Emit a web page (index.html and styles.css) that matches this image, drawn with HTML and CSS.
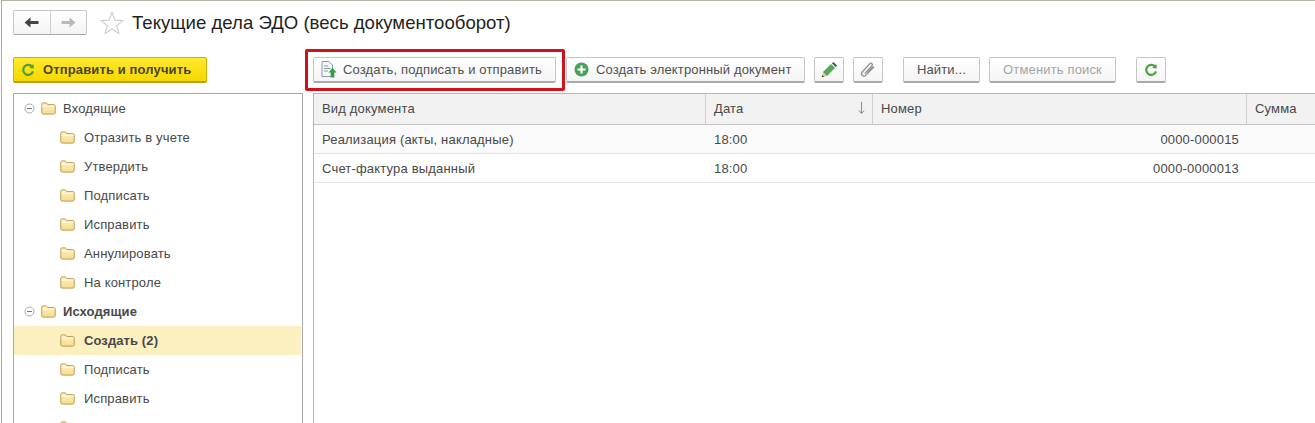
FILE: index.html
```html
<!DOCTYPE html>
<html lang="ru">
<head>
<meta charset="utf-8">
<title>Текущие дела ЭДО</title>
<link rel="stylesheet" href="styles.css">
</head>
<body>
<svg class="defs" width="0" height="0" aria-hidden="true">
  <defs>
    <linearGradient id="fg" x1="0" y1="0" x2="0" y2="1"><stop offset="0" stop-color="#fdf3c4"/><stop offset="1" stop-color="#f5dc90"/></linearGradient>
    <symbol id="folder" viewBox="0 0 15 13">
      <path d="M.8 2.2C.8 1.4 1.3 .9 2.1 .9H5.4L6.8 2.6H12.8C13.6 2.6 14.2 3.1 14.2 3.9V10.9C14.2 11.6 13.6 12.1 12.8 12.1H2.1C1.3 12.1 .8 11.6 .8 10.9Z" fill="url(#fg)" stroke="#c09a4a"/>
      <path d="M1.4 4.2H13.6" stroke="#fffbe6" fill="none"/>
    </symbol>
    <symbol id="minus" viewBox="0 0 11 11">
      <circle cx="5.5" cy="5.5" r="4.5" fill="#fff" stroke="#a9a9a9"/><path d="M3 5.5H8" stroke="#777" fill="none"/>
    </symbol>
    <symbol id="refresh" viewBox="0 0 14 14">
      <path d="M11.4 4.2A5 5 0 1 0 12 8.4" fill="none" stroke="#4c9f3f" stroke-width="2.2"/>
      <path d="M8.4 4.9L12.9 5.4L12.4 1Z" fill="#4c9f3f"/>
    </symbol>
  </defs>
</svg>
<div class="window">
  <header class="head">
    <div class="nav">
      <span class="nav-cell"><svg width="15" height="11" viewBox="0 0 15 11"><path d="M.5 5.5L6.5 .5V4H14.5V7H6.5V10.5Z" fill="#444"/></svg></span>
      <span class="nav-cell"><svg width="15" height="11" viewBox="0 0 15 11"><path d="M14.5 5.5L8.5 .5V4H.5V7H8.5V10.5Z" fill="#b9b9b9"/></svg></span>
    </div>
    <svg class="star" width="24" height="24" viewBox="0 0 24 24"><path d="M12 1.5L14.9 9.2L23 9.6L16.7 14.6L18.8 22.5L12 18L5.2 22.5L7.3 14.6L1 9.6L9.1 9.2Z" fill="#fff" stroke="#cfcfcf" stroke-width="1.2"/></svg>
    <h1 class="title">Текущие дела ЭДО (весь документооборот)</h1>
  </header>
  <div class="main">
    <aside class="side">
      <button class="btn btn-yellow"><svg class="i14" width="14" height="14"><use href="#refresh"/></svg>Отправить и получить</button>
      <nav class="tree">
        <div class="row group"><svg class="tog" width="11" height="11"><use href="#minus"/></svg><svg class="fold" width="15" height="13"><use href="#folder"/></svg>Входящие</div>
        <div class="row child"><svg class="fold" width="15" height="13"><use href="#folder"/></svg>Отразить в учете</div>
        <div class="row child"><svg class="fold" width="15" height="13"><use href="#folder"/></svg>Утвердить</div>
        <div class="row child"><svg class="fold" width="15" height="13"><use href="#folder"/></svg>Подписать</div>
        <div class="row child"><svg class="fold" width="15" height="13"><use href="#folder"/></svg>Исправить</div>
        <div class="row child"><svg class="fold" width="15" height="13"><use href="#folder"/></svg>Аннулировать</div>
        <div class="row child"><svg class="fold" width="15" height="13"><use href="#folder"/></svg>На контроле</div>
        <div class="row group bold"><svg class="tog" width="11" height="11"><use href="#minus"/></svg><svg class="fold" width="15" height="13"><use href="#folder"/></svg>Исходящие</div>
        <div class="row child bold active"><svg class="fold" width="15" height="13"><use href="#folder"/></svg>Создать (2)</div>
        <div class="row child"><svg class="fold" width="15" height="13"><use href="#folder"/></svg>Подписать</div>
        <div class="row child"><svg class="fold" width="15" height="13"><use href="#folder"/></svg>Исправить</div>
        <div class="row child"><svg class="fold" width="15" height="13"><use href="#folder"/></svg>Аннулировать</div>
      </nav>
    </aside>
    <section class="content">
      <div class="toolbar">
        <button class="btn b-create"><svg width="16" height="17" viewBox="0 0 16 17"><path d="M1 .5H8L11.5 4V15.5H1Z" fill="#f4f6f8" stroke="#8d99a6"/><path d="M3 5H7M3 7.5H9.5M3 10H7" stroke="#8d99a6" fill="none"/><path d="M11.5 7L15.5 11.5H13.3V16.5H9.7V11.5H7.5Z" fill="#2f9e44"/></svg>Создать, подписать и отправить</button>
        <button class="btn b-edoc"><svg width="15" height="15" viewBox="0 0 15 15"><circle cx="7.5" cy="7.5" r="7" fill="#45a35a"/><path d="M7.5 3.5V11.5M3.5 7.5H11.5" stroke="#fff" stroke-width="2.2" fill="none"/></svg>Создать электронный документ</button>
        <button class="btn b-icon b-pencil"><svg width="16" height="16" viewBox="0 0 16 16"><path d="M.8 15.2L2 10L6 14Z" fill="#e0c690"/><path d="M.8 15.2L1.3 13L3 14.7Z" fill="#4a3f2a"/><path d="M2 10L10 2L14 6L6 14Z" fill="#57a65c"/><path d="M10.8 1.2L11.8 .4C12.2 .1 12.6 .1 13 .4L15.6 3C15.9 3.4 15.9 3.8 15.6 4.2L14.8 5.2Z" fill="#2f6f45"/></svg></button>
        <button class="btn b-icon b-clip"><svg width="18" height="18" viewBox="0 0 18 18"><path d="M5.8 12.6L13 4.8C14.2 3.4 12.4 1.4 10.8 2.8L3.2 11C1.2 13.2 4.2 16.6 6.6 14.4L15 5.8M8.4 12L14 6" fill="none" stroke="#8f8f8f" stroke-width="1.3"/></svg></button>
        <button class="btn b-find">Найти...</button>
        <button class="btn b-cancel">Отменить поиск</button>
        <button class="btn b-icon b-reload"><svg width="14" height="14"><use href="#refresh"/></svg></button>
        <span class="callout"></span>
      </div>
      <div class="table">
        <div class="tr thead">
          <div class="c c1">Вид документа</div>
          <div class="c c2">Дата<svg class="sort" width="7" height="12" viewBox="0 0 7 12"><path d="M3.5 0V11M1 8.5L3.5 11.5L6 8.5" fill="none" stroke="#8a8a8a"/></svg></div>
          <div class="c c3">Номер</div>
          <div class="c c4">Сумма</div>
        </div>
        <div class="tr odd">
          <div class="c c1">Реализация (акты, накладные)</div>
          <div class="c c2">18:00</div>
          <div class="c c3 num">0000-000015</div>
          <div class="c c4"></div>
        </div>
        <div class="tr">
          <div class="c c1">Счет-фактура выданный</div>
          <div class="c c2">18:00</div>
          <div class="c c3 num">0000-0000013</div>
          <div class="c c4"></div>
        </div>
      </div>
    </section>
  </div>
</div>
</body>
</html>
```
FILE: styles.css
```css
* { box-sizing: border-box; }
html, body { margin: 0; height: 100%; overflow: hidden; background: #fff; }
body { font-family: "Liberation Sans", Arial, sans-serif; font-size: 13px; color: #484848; }
.defs { position: absolute; }
.window {
  height: 423px;
  margin-left: 1px;
  padding-left: 11px;
  border-left: 1px solid #a9a98f;
  border-top: 1px solid #b5b5a6;
  display: flex;
  flex-direction: column;
}
.head { display: flex; align-items: center; height: 25px; margin-top: 9px; }
.nav {
  width: 74px; height: 25px; display: flex;
  border: 1px solid #c8c8c8; border-bottom-color: #a8a8a8; border-radius: 2px;
  background: linear-gradient(#fff, #f4f4f4);
}
.nav-cell { flex: 1; display: flex; align-items: center; justify-content: center; }
.nav-cell + .nav-cell { border-left: 1px solid #cfcfcf; }
.star { margin-left: 13px; }
.title { margin: 0 0 0 8px; font-size: 18.6px; font-weight: 400; color: #1f1f1f; white-space: nowrap; }
.main { display: flex; margin-top: 22px; flex: 1; min-height: 0; }
.side { width: 290px; flex: none; display: flex; flex-direction: column; }
.btn {
  height: 26px; padding: 0; display: flex; align-items: center; flex: none;
  font: 13px "Liberation Sans", Arial, sans-serif; letter-spacing: .15px; color: #505050;
  border: 1px solid #c6c6c6; border-bottom: 2px solid #a9a9a9; border-radius: 2px;
  background: linear-gradient(#fff, #f5f5f5);
}
.btn-yellow {
  width: 194px; padding-left: 7px; gap: 8px; font-weight: 700; letter-spacing: .13px; color: #4a4420;
  border: 1px solid #cdb100; border-bottom: 2px solid #b89e00;
  background: linear-gradient(#ffe92d, #f7d800);
}
.tree {
  margin-top: 10px; flex: 1; min-height: 0; overflow: hidden;
  border: 1px solid #a8a8a8; border-bottom: 0;
}
.row { height: 29px; display: flex; align-items: center; letter-spacing: .15px; white-space: nowrap; margin-right: 1px; }
.group { padding-left: 10px; }
.tog { margin-right: 6px; }
.fold { margin-right: 9px; flex: none; }
.group .fold { margin-right: 7px; }
.child { padding-left: 46px; }
.bold { font-weight: 700; letter-spacing: .1px; }
.active { background: #fcf0c0; }
.content { flex: 1; min-width: 0; margin-left: 10px; position: relative; display: flex; flex-direction: column; }
.toolbar { display: flex; height: 26px; position: relative; }
.b-create { width: 243px; padding-left: 7px; gap: 6px; }
.b-edoc { width: 239px; margin-left: 10px; padding-left: 7px; gap: 7px; }
.b-icon { width: 30px; justify-content: center; }
.b-pencil { margin-left: 9px; }
.b-clip { margin-left: 9px; }
.b-find { width: 77px; margin-left: 20px; justify-content: center; }
.b-cancel { width: 127px; margin-left: 9px; justify-content: center; color: #a5a5a5; }
.b-reload { margin-left: 20px; }
.callout {
  position: absolute; left: -8px; top: -8px; width: 260px; height: 42px;
  border: 3px solid #d0121b; border-radius: 2px; pointer-events: none;
}
.table { margin-top: 10px; border-left: 1px solid #b8b8b8; flex: 1; min-height: 0; }
.tr { display: grid; grid-template-columns: 391px 167px 374px 1fr; height: 29px; border-bottom: 1px solid #e4e4e4; letter-spacing: .18px; }
.odd { background: #fafafa; }
.thead { height: 32px; background: #f2f2f2; border-top: 1px solid #b8b8b8; border-bottom: 1px solid #c4c4c4; }
.c { display: flex; align-items: center; padding: 0 8px; min-width: 0; white-space: nowrap; }
.c + .c { border-left: 1px solid transparent; }
.thead .c { padding-bottom: 2px; }
.thead .c + .c { border-left-color: #d0d0d0; }
.c2 { justify-content: space-between; padding-right: 7px; }
.thead .c1 { padding-right: 0; }
.c3.num { justify-content: flex-end; padding-right: 7px; }
```
